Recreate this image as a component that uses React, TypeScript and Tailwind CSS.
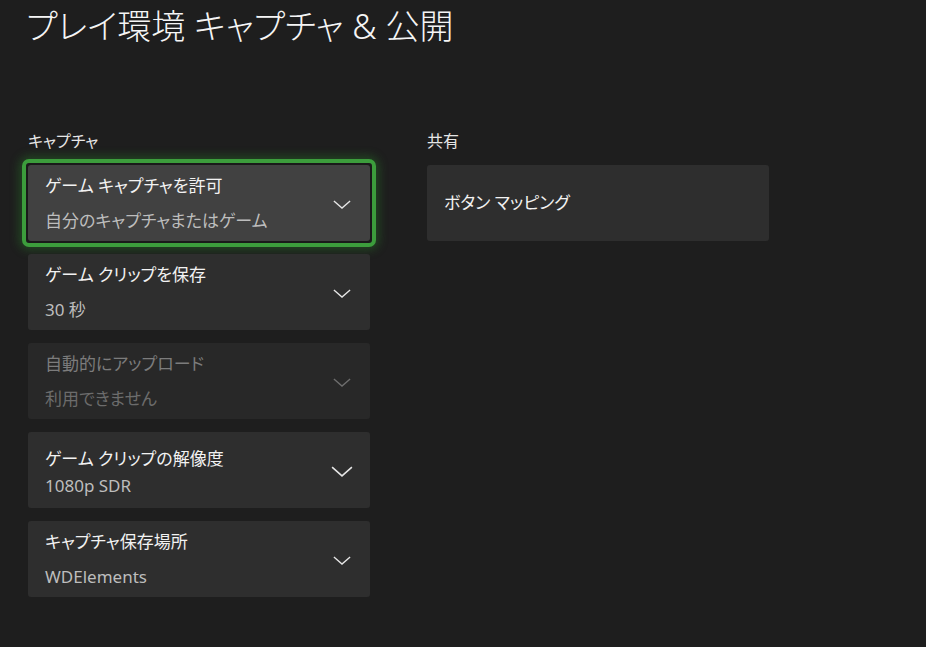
type Item = {
  title: string
  value: string
  disabled?: boolean
  focused?: boolean
  compact?: boolean
}

const captureItems: Item[] = [
  { title: 'ゲーム キャプチャを許可', value: '自分のキャプチャまたはゲーム', focused: true },
  { title: 'ゲーム クリップを保存', value: '30 秒' },
  { title: '自動的にアップロード', value: '利用できません', disabled: true },
  { title: 'ゲーム クリップの解像度', value: '1080p SDR', compact: true },
  { title: 'キャプチャ保存場所', value: 'WDElements' },
]

function Chevron({ dim, big }: { dim?: boolean; big?: boolean }) {
  return (
    <svg
      viewBox="0 0 20 10"
      className={big ? 'w-[22px] h-[11px]' : 'w-[18px] h-[9px]'}
      fill="none"
      stroke={dim ? '#6e6e6e' : '#e6e6e6'}
      strokeWidth={big ? 1.4 : 1.5}
    >
      <path d="M1 1 L10 9 L19 1" />
    </svg>
  )
}

function SettingCard({ item }: { item: Item }) {
  const line = item.compact ? 'h-[27px] leading-[27px]' : 'h-[35px] leading-[35px]'
  const card = (
    <div
      className={
        'h-[76px] w-[342px] rounded-[3px] flex items-center pl-[17px] pr-[20px] ' +
        (item.focused ? 'bg-[#414141]' : item.disabled ? 'bg-[#282828]' : 'bg-[#2e2e2e]')
      }
    >
      <div className={'flex-1 flex flex-col ' + (item.compact ? 'mt-[3px]' : '')}>
        <div
          className={
            line + ' text-[17px] ' + (item.disabled ? 'text-[#7c7c7c]' : 'text-[#f2f2f2]')
          }
        >
          {item.title}
        </div>
        <div
          className={
            line + ' text-[17px] ' + (item.disabled ? 'text-[#6c6c6c]' : 'text-[#bdbdbd]')
          }
        >
          {item.value}
        </div>
      </div>
      <div className="w-[24px] flex justify-center mr-[-4px] mt-[2px]">
        <Chevron dim={item.disabled} big={item.compact} />
      </div>
    </div>
  )

  // focused item: green ring with a soft glow, like the console's focus frame
  if (item.focused) {
    return (
      <div className="-m-[6px] p-[2px] rounded-[7px] bg-[#1a1a1a] border-[4px] border-[#3c9d3c] shadow-[0_0_10px_3px_rgba(40,120,40,0.45)]">
        {card}
      </div>
    )
  }
  return card
}

export default function App() {
  return (
    <div className="w-[926px] h-[647px] bg-[#1e1e1e] overflow-hidden font-['Noto_Sans','Noto_Sans_CJK_JP',sans-serif] [font-feature-settings:'palt'] text-white">
      <h1 className="pl-[26px] pt-[2px] h-[49px] text-[34px] leading-[49px] font-light text-[#f5f5f5]">
        プレイ環境 キャプチャ &amp; 公開
      </h1>

      <div className="flex gap-[57px] pl-[28px] mt-[82px]">
        <section className="w-[342px]">
          <h2 className="text-[16px] leading-[20px] text-[#e6e6e6] mb-[14px]">キャプチャ</h2>
          <div className="flex flex-col gap-[13px]">
            {captureItems.map((it) => (
              <SettingCard key={it.title} item={it} />
            ))}
          </div>
        </section>

        <section className="w-[342px]">
          <h2 className="text-[16px] leading-[20px] text-[#e6e6e6] mb-[14px]">共有</h2>
          <div className="h-[76px] w-[342px] rounded-[3px] bg-[#2e2e2e] flex items-center pl-[17px]">
            <span className="text-[17px] text-[#f2f2f2]">ボタン マッピング</span>
          </div>
        </section>
      </div>
    </div>
  )
}
